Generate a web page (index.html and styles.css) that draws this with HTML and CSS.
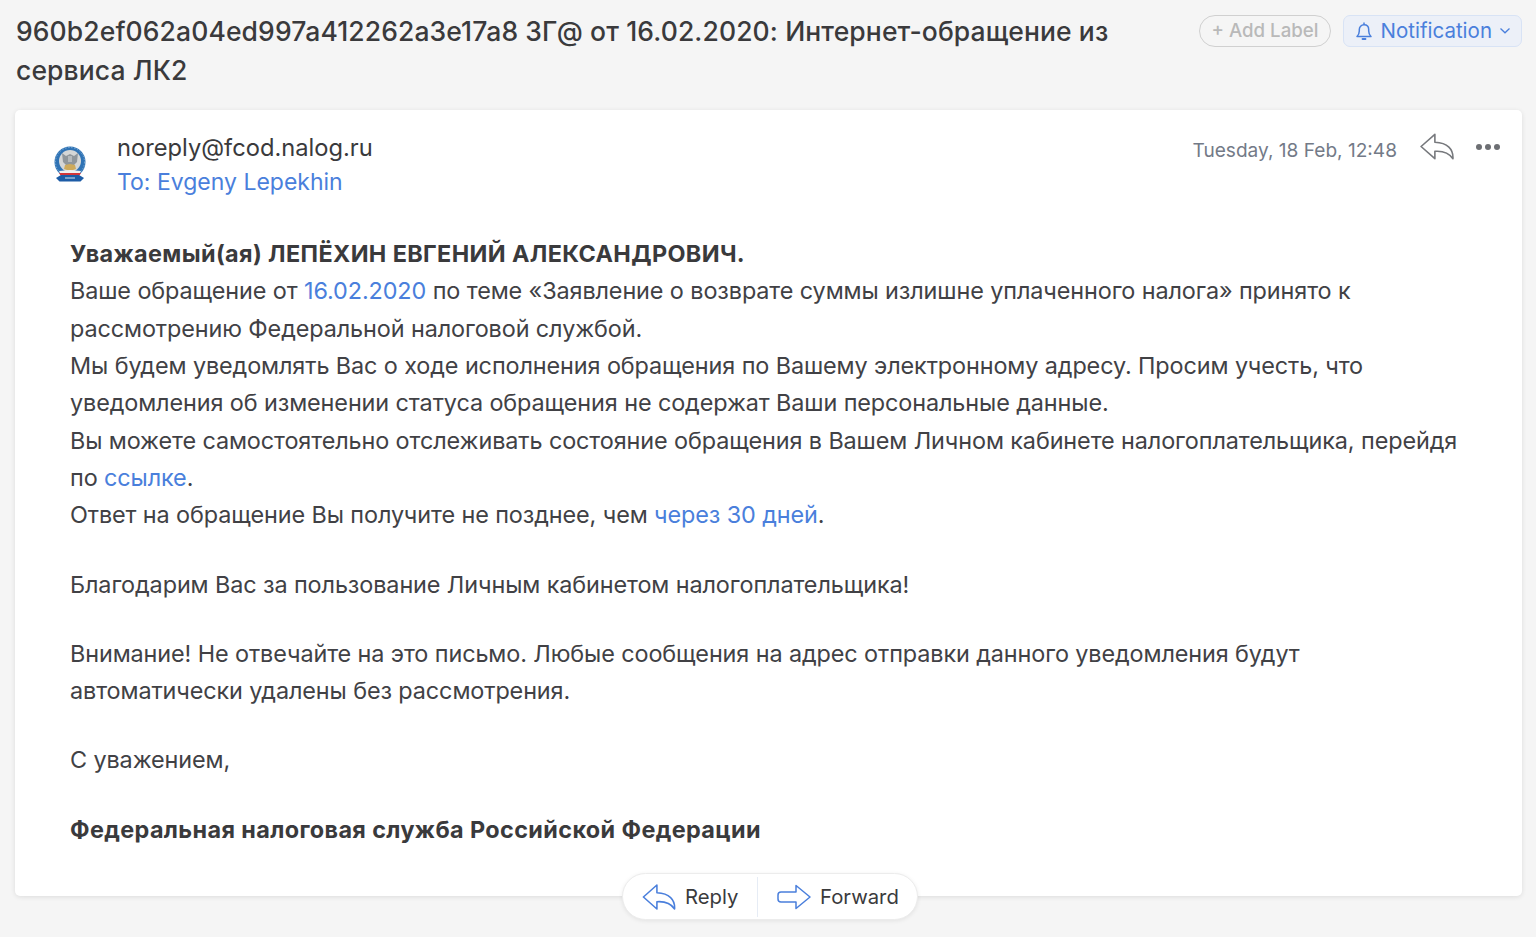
FILE: index.html
```html
<!DOCTYPE html>
<html lang="ru">
<head>
<meta charset="utf-8">
<title>Письмо</title>
<link rel="stylesheet" href="styles.css">
</head>
<body>
<header class="top">
  <h1 class="subject">960b2ef062a04ed997a412262a3e17a8 ЗГ@ от 16.02.2020: Интернет-обращение из сервиса ЛК2</h1>
  <div class="top-actions">
    <span class="label-btn">+ Add Label</span>
    <span class="notif-btn">
      <svg class="bell" viewBox="0 0 18 20" width="18" height="20"><path d="M2 15.500c1.600-1.400 2.300-3 2.300-5.400V8.600C4.300 5.800 6.200 3.800 9 3.800s4.700 2 4.700 4.800v1.500c0 2.400.7 4 2.300 5.400z" fill="none" stroke="#4a7fdc" stroke-width="1.500" stroke-linejoin="round"/><path d="M9 1.500v2.300" stroke="#4a7fdc" stroke-width="1.500"/><path d="M7.500 18h3" stroke="#4a7fdc" stroke-width="1.800" stroke-linecap="round"/></svg>
      Notification
      <svg class="chev" viewBox="0 0 12 8" width="12" height="8"><path d="M1.500 1.500 6 5.800l4.500-4.300" fill="none" stroke="#4a7fdc" stroke-width="1.300"/></svg>
    </span>
  </div>
</header>
<main class="card">
  <div class="msg-head">
    <svg class="avatar" viewBox="0 0 34 38" width="34" height="38">
      <circle cx="17" cy="16" r="15.500" fill="#2f73b5"/>
      <circle cx="17" cy="16" r="14.500" fill="none" stroke="#9cc0de" stroke-width=".7" stroke-dasharray="1.500 1.500"/>
      <circle cx="17" cy="15" r="11" fill="#d4d6d6"/>
      <path d="M9 7l4 3 4-2 4 2 4-3-1 9-4 4h-6l-4-4z" fill="#8f969b"/>
      <path d="M15 10h4v6h-4z" fill="#b4b9bc"/>
      <path d="M12 19l5-1 5 1 1 4-6 2-6-2z" fill="#cdaa5c"/>
      <path d="M6 25l11-1 11 1 -1 2H7z" fill="#f0f0f0"/>
      <path d="M6 27h22l-1.500 2.500h-19z" fill="#d2343a"/>
      <path d="M3 32l5-3h18l5 3-3.500 3.500h-21z" fill="#1d5ca6"/>
      <path d="M12 32h10" stroke="#d7e3f1" stroke-width="1"/>
    </svg>
    <div class="who">
      <div class="from">noreply@fcod.nalog.ru</div>
      <div class="to">To: Evgeny Lepekhin</div>
    </div>
    <div class="meta">
      <span class="date">Tuesday, 18 Feb, 12:48</span>
      <svg class="reply-ic" viewBox="1 1 32 25" width="34" height="27"><path d="M15 2 2 13.500 15 25v-7c7-.5 13 1 17 7 .5-9-5-15-17-15.500z" fill="none" stroke="#77797d" stroke-width="1.500" stroke-linejoin="round"/></svg>
      <span class="dots"><i></i><i></i><i></i></span>
    </div>
  </div>
  <article class="body">
    <p><b>Уважаемый(ая) ЛЕПЁХИН ЕВГЕНИЙ АЛЕКСАНДРОВИЧ.</b><br>
    Ваше обращение от <a>16.02.2020</a> по теме «Заявление о возврате суммы излишне уплаченного налога» принято к<br>
    рассмотрению Федеральной налоговой службой.<br>
    Мы будем уведомлять Вас о ходе исполнения обращения по Вашему электронному адресу. Просим учесть, что<br>
    уведомления об изменении статуса обращения не содержат Ваши персональные данные.<br>
    Вы можете самостоятельно отслеживать состояние обращения в Вашем Личном кабинете налогоплательщика, перейдя<br>
    по <a>ссылке</a>.<br>
    Ответ на обращение Вы получите не позднее, чем <a>через 30 дней</a>.</p>
    <p>Благодарим Вас за пользование Личным кабинетом налогоплательщика!</p>
    <p>Внимание! Не отвечайте на это письмо. Любые сообщения на адрес отправки данного уведомления будут<br>
    автоматически удалены без рассмотрения.</p>
    <p>С уважением,</p>
    <p><b>Федеральная налоговая служба Российской Федерации</b></p>
  </article>
  <div class="pill">
    <span class="pill-item pill-reply">
      <svg viewBox="1 1 32 25" width="34" height="26"><path d="M15 2 2 13.500 15 25v-7c7-.5 13 1 17 7 .5-9-5-15-17-15.500z" fill="none" stroke="#4a7fdc" stroke-width="1.500" stroke-linejoin="round"/></svg>
      Reply
    </span>
    <span class="pill-item pill-forward">
      <svg viewBox="1 1 34 25" width="34" height="26"><path d="M20 2 34 13.500 20 25v-6.500H5c-2 0-3-1.500-3-3v-4c0-1.500 1-3 3-3h15z" fill="none" stroke="#4a7fdc" stroke-width="1.500" stroke-linejoin="round"/></svg>
      Forward
    </span>
  </div>
</main>
</body>
</html>
```
FILE: styles.css
```css
* { box-sizing: border-box; }
html, body { margin: 0; height: 100%; }
body {
  background: #f5f5f5;
  font-family: Inter, "Noto Sans", sans-serif;
  color: #3a3a3c;
  padding: 12px 14px 0 16px;
  overflow: hidden;
}
.top { display: flex; justify-content: space-between; align-items: flex-start; height: 98px; }
.subject { margin: 0; width: 1130px; font-size: 26.500px; letter-spacing: .11px; line-height: 39px; font-weight: 500; color: #3a3a3c; }
.top-actions { display: flex; gap: 12px; margin-top: 3px; }
.label-btn {
  height: 32px; padding: 0 11px; border: 1.500px solid #d0d0d0; border-radius: 16px;
  font-size: 18.700px; line-height: 29px; color: #b9b9b9; font-weight: 500;
}
.notif-btn {
  height: 32px; padding: 0 10px 0 11px; border: 1px solid #d8e3f5; border-radius: 7px; background: #ecf0f8;
  font-size: 20.500px; line-height: 30px; color: #4a7fdc; display: flex; align-items: center; gap: 8px;
}
.chev { margin-left: -1px; }
.card {
  position: relative; height: 786px; margin-left: -1px; background: #fff; border-radius: 5px;
  box-shadow: 0 1px 5px rgba(0,0,0,.1); padding: 21px 0 0 38px;
}
.msg-head { display: flex; align-items: flex-start; }
.avatar { margin-top: 15px; flex: none; }
.who { margin-left: 30px; font-size: 23.500px; line-height: 34px; }
.from { color: #3a3a3c; font-size: 23.700px; }
.to { color: #4a7fdc; font-size: 23px; }
.meta { margin-left: auto; display: flex; align-items: center; padding-right: 22px; height: 36px; }
.date { font-size: 19.100px; color: #737a87; margin-top: 1px; }
.reply-ic { margin-left: 23px; margin-top: -6px; }
.dots { display: flex; gap: 3px; margin-left: 22px; margin-top: -4px; }
.dots i { width: 6px; height: 6px; border-radius: 50%; background: #6d6f73; }
.body { margin: 36px 0 0 17px; font-size: 23.400px; letter-spacing: -.1px; line-height: 37.330px; color: #414145; }
.body p { margin: 0 0 31.900px; }
.body b { font-weight: 700; color: #3a3a3c; letter-spacing: .38px; }
.body a { color: #4a7fdc; }
.pill {
  position: absolute; left: 607px; top: 763px; width: 296px; height: 47px;
  display: flex; align-items: center; background: #fff; border: 1px solid #ececec;
  border-radius: 24px; box-shadow: 0 1px 4px rgba(0,0,0,.08);
  font-size: 20.300px; color: #3a3a3c;
}
.pill-item { display: flex; align-items: center; gap: 9px; height: 40px; }
.pill-reply { padding-left: 19px; width: 135px; border-right: 1px solid #e6ecf5; }
.pill-forward { padding-left: 19px; }
```
